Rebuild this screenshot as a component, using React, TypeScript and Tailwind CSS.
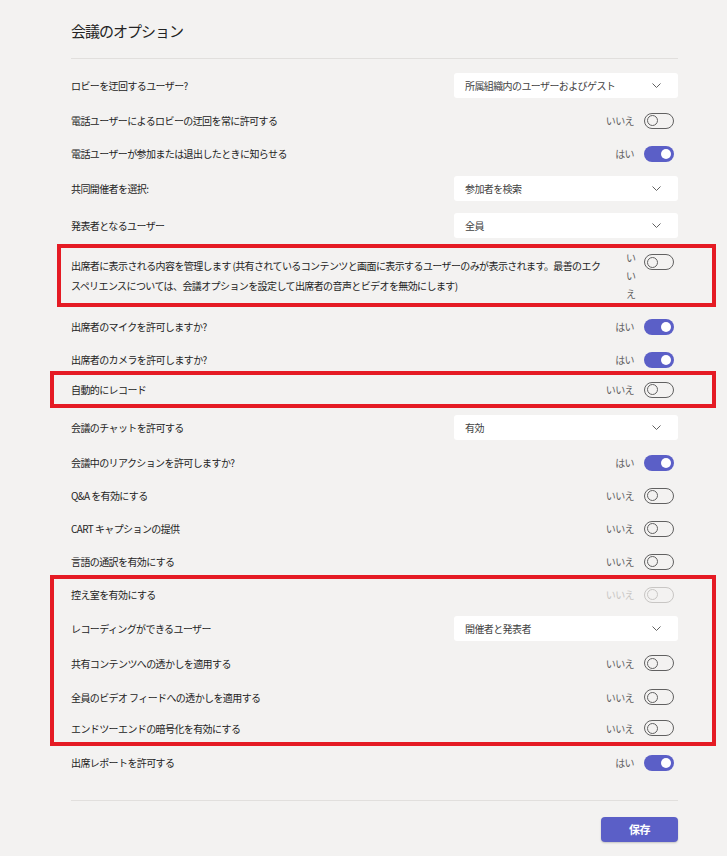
import React, { FC, ReactNode } from 'react';

type Ctl =
    | { kind: 'toggle'; on: boolean; disabled?: boolean }
    | { kind: 'select'; value: string };

interface RowDef {
    label: string;
    ctl: Ctl;
    h: string;
}

const Toggle: FC<{ on: boolean; disabled?: boolean }> = ({ on, disabled }) => {
    if (on) {
        return (
            <div className="flex h-[16px] w-[30px] items-center justify-end rounded-full bg-[#5b5fc7] pr-[3px]">
                <div className="h-[10px] w-[10px] rounded-full bg-white" />
            </div>
        );
    }
    return (
        <div
            className={`flex h-[16px] w-[30px] items-center rounded-full border pl-[2px] ${
                disabled ? 'border-[#c8c6c4]' : 'border-[#616161]'
            }`}
        >
            <div
                className={`h-[11px] w-[11px] rounded-full border-[1.5px] ${
                    disabled ? 'border-[#c8c6c4]' : 'border-[#616161]'
                }`}
            />
        </div>
    );
};

const Select: FC<{ value: string }> = ({ value }) => (
    <div className="flex h-[25px] w-[224px] items-center justify-between rounded-[3px] bg-white pl-[11px] pr-[17px] text-[#424242]">
        <span>{value}</span>
        <svg width="9" height="5" viewBox="0 0 9 5" fill="none">
            <path d="M0.5 0.5L4.5 4.5L8.5 0.5" stroke="#616161" strokeWidth="1" />
        </svg>
    </div>
);

const Control: FC<{ ctl: Ctl }> = ({ ctl }) => {
    if (ctl.kind === 'select') return <Select value={ctl.value} />;
    return (
        <div className="flex items-center gap-[10px] pr-[4px]">
            <span className={ctl.disabled ? 'text-[#c8c6c4]' : 'text-[#616161]'}>{ctl.on ? 'はい' : 'いいえ'}</span>
            <Toggle on={ctl.on} disabled={ctl.disabled} />
        </div>
    );
};

const Row: FC<{ row: RowDef; className?: string }> = ({ row, className = '' }) => (
    <div className={`flex items-center justify-between ${row.h} ${className}`}>
        <span className="text-[#242424]">{row.label}</span>
        <Control ctl={row.ctl} />
    </div>
);

const Marked: FC<{ children: ReactNode; className: string }> = ({ children, className }) => (
    <div className={`-mr-[38px] border-4 border-[#e51b24] pr-[34px] ${className}`}>{children}</div>
);

const off: Ctl = { kind: 'toggle', on: false };
const on: Ctl = { kind: 'toggle', on: true };

const App: FC = () => (
    <div
        className="min-h-[856px] w-full bg-[#f3f2f1] text-[10px] tracking-[-0.6px]"
        style={{ fontFamily: '"Noto Sans CJK JP", "Noto Sans", sans-serif' }}
    >
        <div className="ml-[71px] w-[607px]">
            <h1 className="pt-[20px] text-[15px] leading-[22px] tracking-[-1px] text-[#242424]">会議のオプション</h1>
            <div className="mt-[16px] h-px bg-[#e1dfdd]" />
            <div className="mt-[8px]">
                <Row row={{ label: 'ロビーを迂回するユーザー?', ctl: { kind: 'select', value: '所属組織内のユーザーおよびゲスト' }, h: 'h-[37px]' }} />
                <Row row={{ label: '電話ユーザーによるロビーの迂回を常に許可する', ctl: off, h: 'h-[33px]' }} />
                <Row row={{ label: '電話ユーザーが参加または退出したときに知らせる', ctl: on, h: 'h-[33px]' }} />
                <Row row={{ label: '共同開催者を選択:', ctl: { kind: 'select', value: '参加者を検索' }, h: 'h-[37px]' }} />
                <Row row={{ label: '発表者となるユーザー', ctl: { kind: 'select', value: '全員' }, h: 'h-[37px]' }} />

                <Marked className="-ml-[14px] pl-[10px]">
                    <div className="flex h-[55px] items-center gap-[14px]">
                        <p className="flex-1 leading-[20px] text-[#242424]">
                            出席者に表示される内容を管理します (共有されているコンテンツと画面に表示するユーザーのみが表示されます。最善のエク
                            <br />
                            スペリエンスについては、会議オプションを設定して出席者の音声とビデオを無効にします)
                        </p>
                        <div className="flex items-start gap-[8px] self-start pr-[4px] pt-[1px]">
                            <span className="w-[10px] break-all leading-[18px] text-[#616161]">いいえ</span>
                            <div className="mt-[5px]">
                                <Toggle on={false} />
                            </div>
                        </div>
                    </div>
                </Marked>

                <Row row={{ label: '出席者のマイクを許可しますか?', ctl: on, h: 'h-[33px]' }} className="mt-[3px]" />
                <Row row={{ label: '出席者のカメラを許可しますか?', ctl: on, h: 'h-[33px]' }} />

                <Marked className="-ml-[21px] -mt-[5px] pl-[17px]">
                    <Row row={{ label: '自動的にレコード', ctl: off, h: 'h-[29px]' }} />
                </Marked>

                <Row row={{ label: '会議のチャットを許可する', ctl: { kind: 'select', value: '有効' }, h: 'h-[37px]' }} className="mt-[1px]" />
                <Row row={{ label: '会議中のリアクションを許可しますか?', ctl: on, h: 'h-[33px]' }} />
                <Row row={{ label: 'Q&A を有効にする', ctl: off, h: 'h-[33px]' }} />
                <Row row={{ label: 'CART キャプションの提供', ctl: off, h: 'h-[33px]' }} />
                <Row row={{ label: '言語の通訳を有効にする', ctl: off, h: 'h-[33px]' }} />

                <Marked className="-ml-[21px] -mt-[3px] pl-[17px]">
                    <Row row={{ label: '控え室を有効にする', ctl: { kind: 'toggle', on: false, disabled: true }, h: 'h-[31px]' }} />
                    <Row row={{ label: 'レコーディングができるユーザー', ctl: { kind: 'select', value: '開催者と発表者' }, h: 'h-[36px]' }} />
                    <Row row={{ label: '共有コンテンツへの透かしを適用する', ctl: off, h: 'h-[34px]' }} />
                    <Row row={{ label: '全員のビデオ フィードへの透かしを適用する', ctl: off, h: 'h-[34px]' }} />
                    <Row row={{ label: 'エンドツーエンドの暗号化を有効にする', ctl: off, h: 'h-[28px]' }} />
                </Marked>

                <Row row={{ label: '出席レポートを許可する', ctl: on, h: 'h-[33px]' }} />
            </div>
            <div className="mt-[21px] h-px bg-[#e1dfdd]" />
            <div className="mt-[16px] flex justify-end pb-[15px]">
                <button
                    type="button"
                    className="h-[25px] w-[77px] rounded-[4px] bg-[#5b5fc7] text-[11px] font-bold text-white shadow-[0_1px_2px_rgba(0,0,0,0.2)]"
                >
                    保存
                </button>
            </div>
        </div>
    </div>
);

export default App;
